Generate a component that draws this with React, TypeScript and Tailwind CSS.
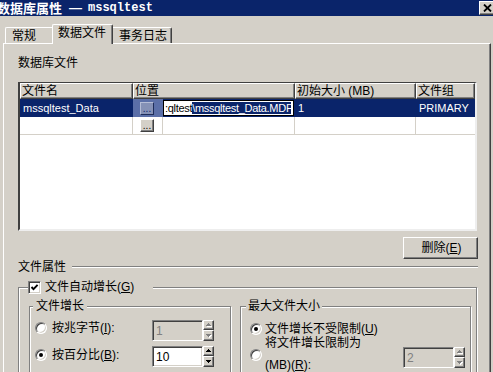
import type { ReactNode } from 'react';

// Win2000 style bevels
const raised =
  'border border-t-white border-l-white border-r-[#404040] border-b-[#404040] shadow-[inset_-1px_-1px_0_#808080]';
const sunken =
  'border border-t-[#808080] border-l-[#808080] border-r-white border-b-white shadow-[inset_1px_1px_0_#404040,inset_-1px_-1px_0_#d4d0c8]';
const etched = 'border border-[#808080] shadow-[inset_1px_1px_0_#ffffff,1px_1px_0_#ffffff]';

function Arrow({ up, disabled }: { up?: boolean; disabled?: boolean }) {
  const d = up ? 'M2 0h1v1h1v1h1v1h-5v-1h1v-1h1z' : 'M0 0h5v1h-1v1h-1v1h-1v-1h-1v-1h-1z';
  return (
    <svg width="6" height="4" viewBox="0 0 6 4" shapeRendering="crispEdges">
      {disabled && <path d={d} fill="#ffffff" transform="translate(1 1)" />}
      <path d={d} fill={disabled ? '#808080' : '#000000'} />
    </svg>
  );
}

function SpinBox({ value, disabled }: { value: string; disabled?: boolean }) {
  return (
    <div className="flex h-[21px] shrink-0">
      <div
        className={`${sunken} w-[51px] h-full flex items-center pl-[3px] text-[12px] font-['Liberation_Sans',sans-serif] ${
          disabled ? 'bg-[#d4d0c8] text-[#808080]' : 'bg-white text-black'
        }`}
      >
        {value}
      </div>
      <div className="flex flex-col w-[11px] h-full">
        <div className={`${raised} bg-[#d4d0c8] h-[10px] flex items-center justify-center`}>
          <Arrow up disabled={disabled} />
        </div>
        <div className={`${raised} bg-[#d4d0c8] h-[11px] flex items-center justify-center`}>
          <Arrow disabled={disabled} />
        </div>
      </div>
    </div>
  );
}

function Radio({ checked }: { checked?: boolean }) {
  return (
    <span className="w-[12px] h-[12px] shrink-0 rounded-full bg-white border border-t-[#808080] border-l-[#808080] border-r-[#ffffff] border-b-[#ffffff] shadow-[inset_1px_1px_0_#404040,inset_-1px_-1px_0_#d4d0c8] flex items-center justify-center">
      {checked && <span className="w-[4px] h-[4px] rounded-full bg-black" />}
    </span>
  );
}

function Key({ children }: { children: ReactNode }) {
  return <span className="underline underline-offset-[1px]">{children}</span>;
}

function DotsButton({ selected }: { selected?: boolean }) {
  return (
    <div
      className={`w-[14px] h-[13px] flex items-end justify-center pb-[1px] text-[10px] leading-[8px] ${
        selected
          ? 'bg-[#8591b6] border border-t-[#b4bcd6] border-l-[#b4bcd6] border-r-[#1e2d5a] border-b-[#1e2d5a] text-[#0a246a]'
          : `${raised} bg-[#d4d0c8] text-black`
      }`}
    >
      ...
    </div>
  );
}

export default function App() {
  return (
    <div className="w-[493px] h-[372px] overflow-hidden bg-[#d4d0c8] text-black text-[12px] leading-[14px] font-['Liberation_Sans','Noto_Sans_CJK_SC',sans-serif] select-none">
      {/* title bar */}
      <div className="h-[16px] bg-[#0a246a] flex items-center text-white font-bold">
        <span className="ml-[-3px] text-[13px] font-['Noto_Sans_CJK_SC',sans-serif]">数据库属性</span>
        <span className="ml-[7px] text-[13px]">—</span>
        <span className="ml-[6px] text-[12px] font-['Liberation_Mono',monospace]">mssqltest</span>
        <div className={`ml-auto mr-[-2px] mt-[-1px] w-[16px] h-[14px] bg-[#d4d0c8] ${raised} flex items-center justify-center`}>
          <svg width="9" height="8" viewBox="0 0 9 8">
            <path d="M1 0.5 L8 7.5 M8 0.5 L1 7.5" stroke="#000" strokeWidth="1.8" />
          </svg>
        </div>
      </div>

      {/* tabs */}
      <div className="relative z-10 h-[27px] pl-[5px] flex items-end">
        <div className="w-[47px] h-[16px] border-t border-l border-t-white border-l-white rounded-tl-[2px] pl-[6px] flex items-center">
          常规
        </div>
        <div className="w-[61px] h-[20px] mb-[-1px] bg-[#d4d0c8] border-t border-l border-r border-t-white border-l-white border-r-[#404040] rounded-t-[2px] shadow-[inset_-1px_0_0_#808080] pl-[5px] pt-[1px]">
          数据文件
        </div>
        <div className="w-[59px] h-[16px] border-t border-r border-t-white border-r-[#404040] shadow-[inset_-1px_0_0_#808080] rounded-tr-[2px] pl-[6px] flex items-center">
          事务日志
        </div>
      </div>

      {/* page */}
      <div className="ml-[3px] w-[488px] h-[330px] border-t border-l border-r border-t-white border-l-white border-r-[#404040] shadow-[inset_-1px_0_0_#808080] pl-[14px] pr-[12px] flex flex-col">
        <div className="mt-[12px]">数据库文件</div>

        {/* file grid */}
        <div className="mt-[12px] w-[459px] h-[149px] shrink-0 bg-white border-t border-l-2 border-r-2 border-b-2 border-t-[#404040] border-l-[#404040] border-r-[#eeeeee] border-b-[#eeeeee] flex flex-col">
          <div className="flex h-[16px] shrink-0 bg-[#d4d0c8]">
            {[
              ['文件名', 'w-[113px]'],
              ['位置', 'w-[162px]'],
              ['初始大小 (MB)', 'w-[121px]'],
              ['文件组', 'w-[59px]'],
            ].map(([label, w]) => (
              <div key={label} className={`${w} ${raised} pl-[1px] flex items-center whitespace-nowrap overflow-hidden`}>
                {label}
              </div>
            ))}
          </div>

          <div className="flex h-[18px] shrink-0 bg-[#0a246a] text-white text-[11px]">
            <div className="w-[113px] pl-[3px] flex items-center">mssqltest_Data</div>
            <div className="w-[162px] flex items-center">
              <div className="w-[30px] h-full bg-[#5b6fa8] flex items-center pl-[7px]">
                <DotsButton selected />
              </div>
              <div className="w-[131px] h-[16px] bg-white border border-black flex items-center pl-[1px] pr-[2px]">
                <div className="flex-1 overflow-hidden whitespace-nowrap text-black tracking-[-0.3px]">
                  <span>:qltest</span>
                  <span className="bg-[#0a246a] text-white">\mssqltest_Data.MDF</span>
                </div>
              </div>
            </div>
            <div className="w-[121px] pl-[3px] flex items-center">1</div>
            <div className="w-[59px] pl-[3px] flex items-center">PRIMARY</div>
          </div>

          <div className="flex h-[18px] shrink-0 border-b border-b-[#d4d0c8]">
            <div className="w-[113px] border-r border-r-[#d4d0c8]" />
            <div className="w-[162px] flex border-r border-r-[#d4d0c8]">
              <div className="w-[30px] h-full border-r border-r-[#d4d0c8] flex items-center pl-[7px]">
                <DotsButton />
              </div>
            </div>
            <div className="w-[121px] border-r border-r-[#d4d0c8]" />
            <div className="w-[59px]" />
          </div>
        </div>

        <button
          className={`self-end mt-[6px] w-[75px] h-[22px] shrink-0 bg-[#d4d0c8] ${raised} flex items-center justify-center pl-[2px]`}
        >
          删除(<Key>E</Key>)
        </button>

        {/* file properties */}
        <div className="mt-[2px] h-[12px] flex items-center">
          <span className="leading-[12px]">文件属性</span>
          <div className="flex-1 ml-[6px] h-[2px] border-t border-b border-t-[#808080] border-b-white" />
        </div>

        <fieldset className={`mt-[7px] w-[459px] ${etched} pl-[10px] pr-[5px] pt-[5px] pb-[20px]`}>
          <legend className="ml-[-1px] w-[125px] h-[14px] bg-[#d4d0c8] flex items-center">
            <span className={`w-[13px] h-[13px] bg-white ${sunken} flex items-center justify-center`}>
              <svg width="9" height="9" viewBox="0 0 9 9">
                <polyline points="1.5,4 3.5,6.2 7.6,1.8" fill="none" stroke="#000" strokeWidth="1.9" />
              </svg>
            </span>
            <span className="ml-[4px]">
              文件自动增长(<Key>G</Key>)
            </span>
          </legend>

          <div className="flex gap-[9px]">
            <fieldset className={`w-[202px] ${etched} pl-[5px] pt-[7px] pb-[12px]`}>
              <legend className="ml-[-2px] px-[3px] h-[14px] bg-[#d4d0c8]">文件增长</legend>
              <div className="flex items-start h-[21px]">
                <div className="flex items-center h-[15px]">
                  <Radio />
                  <span className="ml-[5px] w-[100px]">
                    按兆字节(<Key>I</Key>):
                  </span>
                </div>
                <SpinBox value="1" disabled />
              </div>
              <div className="flex items-start h-[21px] mt-[5px]">
                <div className="flex items-center h-[16px] mt-[1px]">
                  <Radio checked />
                  <span className="ml-[5px] w-[100px]">
                    按百分比(<Key>B</Key>):
                  </span>
                </div>
                <SpinBox value="10" />
              </div>
            </fieldset>

            <fieldset className={`w-[231px] ${etched} pl-[9px] pt-[7px] pb-[12px]`}>
              <legend className="ml-[-4px] px-[2px] h-[14px] bg-[#d4d0c8]">最大文件大小</legend>
              <div className="flex items-center h-[15px] mt-[1px]">
                <Radio checked />
                <span className="ml-[3px]">
                  文件增长不受限制(<Key>U</Key>)
                </span>
              </div>
              <div className="flex items-start">
                <div className="mt-[13px]">
                  <Radio />
                </div>
                <div className="ml-[3px] w-[138px] flex flex-col gap-[8px]">
                  <span>将文件增长限制为</span>
                  <span>
                    (MB)(<Key>R</Key>):
                  </span>
                </div>
                <div className="mt-[11px]">
                  <SpinBox value="2" disabled />
                </div>
              </div>
            </fieldset>
          </div>
        </fieldset>
      </div>
    </div>
  );
}
